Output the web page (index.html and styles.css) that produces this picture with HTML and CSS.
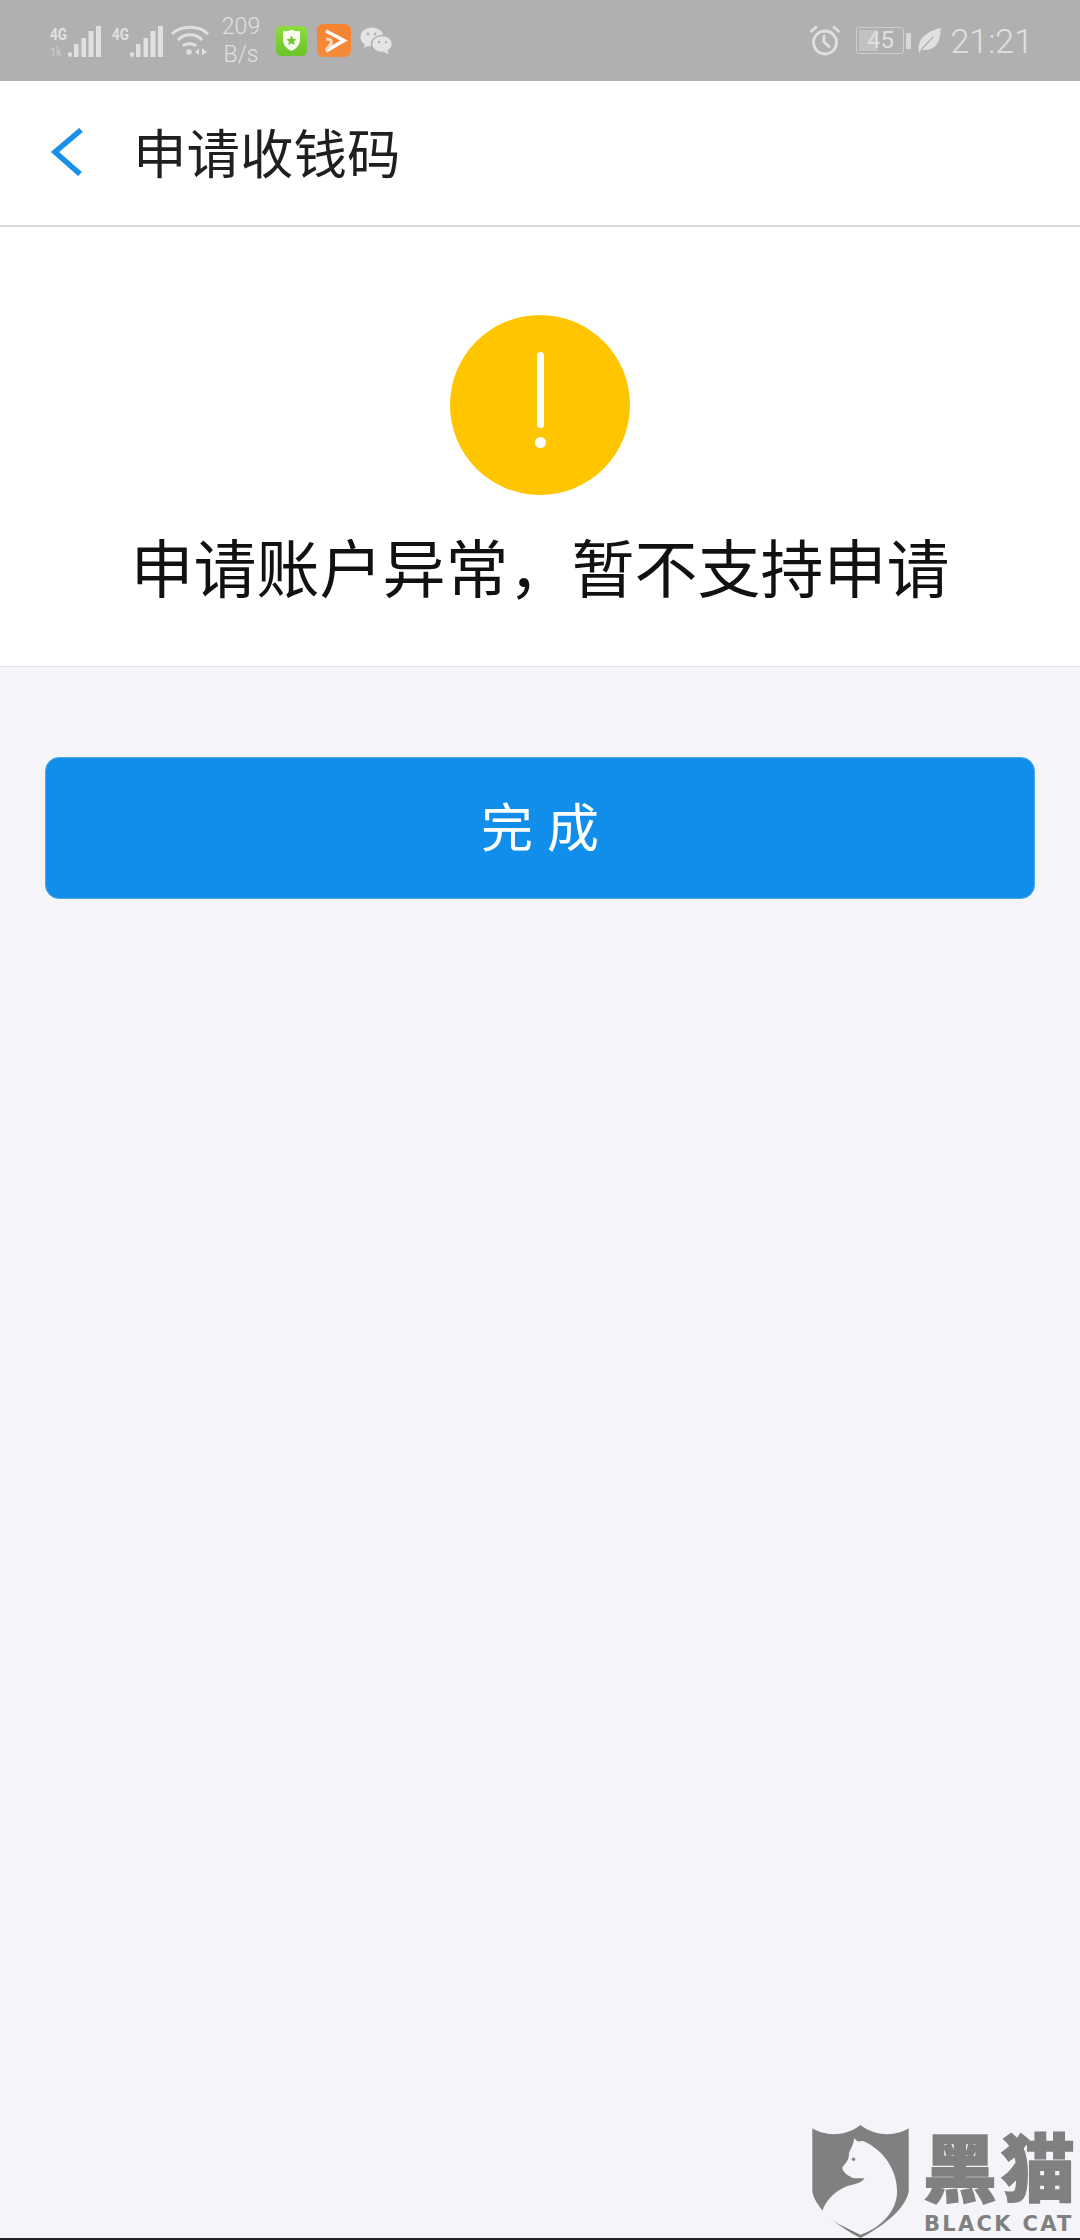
FILE: index.html
```html
<!DOCTYPE html>
<html lang="zh-CN">
<head>
    <meta charset="UTF-8">
    <meta name="viewport" content="width=device-width, initial-scale=1.0">
    <title>申请收钱码</title>
    <link rel="stylesheet" href="styles.css">
</head>
<body>
    <div class="status-bar">
        <div class="status-left">
            <svg class="signal" width="52" height="36" viewBox="0 0 52 36">
                <text x="0" y="18" class="net-label">4G</text>
                <text x="0" y="34" class="net-label dim">1k</text>
                <rect x="18" y="30" width="4" height="5" rx="2"/>
                <rect x="24" y="22" width="4.500" height="13"/>
                <rect x="31.500" y="16" width="4.500" height="19"/>
                <rect x="38.500" y="9" width="5" height="26"/>
                <rect x="46" y="4" width="5" height="31"/>
            </svg>
            <svg class="signal signal-2" width="51" height="36" viewBox="0 0 51 36">
                <text x="0" y="18" class="net-label">4G</text>
                <rect x="18" y="30" width="4" height="5" rx="2"/>
                <rect x="24" y="22" width="4.500" height="13"/>
                <rect x="31.500" y="16" width="4.500" height="19"/>
                <rect x="38.500" y="9" width="5" height="26"/>
                <rect x="46" y="4" width="5" height="31"/>
            </svg>
            <svg class="wifi" width="38" height="30" viewBox="0 0 38 30" fill="none" stroke="#e0e0e0" stroke-width="3">
                <path d="M1 9 C10 0 28 0 37 9"/>
                <path d="M7 15 C13 8 25 8 31 15"/>
                <path d="M12 21 C15 18 22 18 25 21"/>
                <circle cx="18" cy="27" r="2.800" fill="#e0e0e0" stroke="none"/>
                <path d="M28 23 L24 27 L28 30 Z M31 23 L36 27 L31 30 Z" fill="#e0e0e0" stroke="none"/>
            </svg>
            <div class="net-speed">209<br>B/s</div>
            <svg class="app-icon icon-shield" width="31" height="30" viewBox="0 0 31 30">
                <defs>
                    <linearGradient id="greenGrad" x1="0" y1="0" x2="0" y2="1">
                        <stop offset="0" stop-color="#8fdb3f"/>
                        <stop offset="1" stop-color="#6cc22a"/>
                    </linearGradient>
                    <linearGradient id="orangeGrad" x1="0" y1="0" x2="0" y2="1">
                        <stop offset="0" stop-color="#f5832e"/>
                        <stop offset="1" stop-color="#f78a3c"/>
                    </linearGradient>
                </defs>
                <rect width="31" height="30" rx="5" fill="url(#greenGrad)"/>
                <path d="M7 5 Q12 6 15.500 3.500 Q19 6 24 5 V14 Q24 21 15.500 25 Q7 21 7 14 Z" fill="#f6faef"/>
                <path d="M15.500 9.500 L17 12.800 L20.500 13.200 L18 15.500 L18.700 19 L15.500 17.200 L12.300 19 L13 15.500 L10.500 13.200 L14 12.800 Z" fill="#74c52e"/>
            </svg>
            <svg class="app-icon icon-play" width="34" height="33" viewBox="0 0 34 33">
                <rect width="34" height="33" rx="6" fill="url(#orangeGrad)"/>
                <path d="M9 7 L27 16.500 L9 27" fill="none" stroke="#fff" stroke-width="3.600"/>
                <path d="M9 15 C14 15 15 17 14 20 L9 26" fill="none" stroke="#fbd8b8" stroke-width="3.200"/>
            </svg>
            <svg class="app-icon icon-chat" width="33" height="27" viewBox="0 0 33 27" fill="#e4e4e4">
                <ellipse cx="12" cy="10" rx="11.500" ry="9.500"/>
                <path d="M5 16 L4 21 L10 18 Z"/>
                <ellipse cx="22" cy="17" rx="10.500" ry="8.500" stroke="#b0b0b0" stroke-width="1.500"/>
                <path d="M27 23 L29 27 L23 25 Z"/>
                <circle cx="8" cy="7" r="1.400" fill="#b0b0b0"/>
                <circle cx="15" cy="7" r="1.400" fill="#b0b0b0"/>
                <circle cx="19" cy="15" r="1.200" fill="#b0b0b0"/>
                <circle cx="26" cy="15" r="1.200" fill="#b0b0b0"/>
            </svg>
        </div>
        <div class="status-right">
            <svg class="alarm" width="32" height="31" viewBox="0 0 32 31" fill="none" stroke="#e0e0e0" stroke-width="2.800">
                <circle cx="16" cy="17.500" r="11.500"/>
                <path d="M15 10 V17 L21 22.500"/>
                <path d="M1.500 7 L8 1.500 M30.500 7 L24 1.500"/>
            </svg>
            <div class="battery">
                <div class="battery-body">
                    <div class="battery-fill" style="width: 45%"></div>
                    <span class="battery-num">45</span>
                </div>
                <div class="battery-cap"></div>
            </div>
            <svg class="leaf" width="23" height="27" viewBox="0 0 23 27">
                <path d="M22.500 1 C23 14 18 23 7 23 C4 23 2 23 1 26 C-1 16 3 6 22.500 1 Z" fill="#e0e0e0"/>
                <path d="M3 23 L15 10" stroke="#b0b0b0" stroke-width="1.300"/>
            </svg>
            <span class="clock">21:21</span>
        </div>
    </div>

    <header class="nav-bar">
        <svg class="back" width="33" height="48" viewBox="0 0 33 48" fill="none" stroke="#1a8fe8" stroke-width="5.500">
            <path d="M31 2 L5 24 L30 46"/>
        </svg>
        <h1>申请收钱码</h1>
    </header>

    <section class="result">
        <div class="warn-circle">
            <div class="warn-bar"></div>
            <div class="warn-dot"></div>
        </div>
        <p class="result-msg">申请账户异常，暂不支持申请</p>
    </section>

    <button class="done-btn" type="button">完成</button>

    <div class="watermark">
        <svg class="wm-shield" width="97" height="113" viewBox="95 75 290 340">
            <path d="M95 85 C125 105 190 115 240 75 C290 115 355 105 385 85 V275 C375 330 300 385 240 415 C180 385 105 330 95 275 Z" fill="#808080"/>
            <path d="M220 115 L232 125 L248 123 C310 150 350 210 350 275 C350 335 300 385 240 405 C200 385 150 365 125 335 C135 300 170 265 215 255 C235 250 245 245 252 235 C235 235 215 238 210 230 C195 225 185 210 185 203 C195 190 205 180 205 165 C205 150 222 135 220 115 Z" fill="#f4f4f9"/>
            <circle cx="219" cy="178" r="5" fill="#808080"/>
        </svg>
        <div class="wm-text">
            <div class="wm-cn">黑猫</div>
            <div class="wm-en">BLACK CAT</div>
        </div>
    </div>
    <div class="bottom-line"></div>
</body>
</html>
```

FILE: styles.css
```css
* {
    box-sizing: border-box;
}
html, body {
    height: 100%;
}
body {
    margin: 0;
    background-color: #f4f4f9;
    font-family: "Noto Sans CJK SC", "Liberation Sans", sans-serif;
    position: relative;
    overflow: hidden;
}

/* status bar */
.status-bar {
    height: 81px;
    background-color: #b0b0b0;
    display: flex;
    justify-content: space-between;
    align-items: center;
    padding: 0 47px 0 50px;
    color: #e0e0e0;
}
.status-left, .status-right {
    display: flex;
    align-items: center;
}
.signal {
    fill: #e0e0e0;
    margin-top: -2px;
}
.net-label {
    font-family: "Roboto", sans-serif;
    font-size: 17px;
    font-weight: 700;
    fill: #e0e0e0;
    transform: scaleX(.8);
}
.net-label.dim {
    fill: #c6c6c6;
    font-size: 13px;
}
.signal-2 {
    margin-left: 10px;
}
.wifi {
    margin-left: 8px;
    margin-top: -2px;
}
.net-speed {
    font-family: "Roboto", sans-serif;
    font-weight: 300;
    font-size: 23px;
    line-height: 28px;
    text-align: center;
    margin-left: 11px;
    width: 42px;
}
.icon-shield {
    margin-left: 14px;
}
.icon-play {
    margin-left: 10px;
}
.icon-chat {
    margin-left: 9px;
}
.alarm {
    margin-right: 15px;
}
.battery {
    display: flex;
    align-items: center;
    margin-right: 7px;
}
.battery-body {
    width: 48px;
    height: 27px;
    border: 1.500px solid #cdcdcd;
    border-radius: 3px;
    position: relative;
    padding: 2px;
}
.battery-fill {
    height: 100%;
    background-color: #c2c2c2;
}
.battery-num {
    position: absolute;
    top: -1px;
    left: 0;
    right: 0;
    text-align: center;
    font-family: "Roboto", sans-serif;
    font-size: 24px;
    line-height: 26px;
}
.battery-cap {
    width: 5px;
    height: 16px;
    margin-left: 2px;
    background-color: #d8d8d8;
}
.clock {
    font-family: "Roboto", sans-serif;
    font-weight: 300;
    font-size: 34px;
    margin-left: 9px;
}

/* nav */
.nav-bar {
    height: 146px;
    background-color: #fff;
    border-bottom: 2px solid #d8d8d8;
    display: flex;
    align-items: center;
    padding: 0 0 2px 50px;
}
.back {
    flex: none;
}
.nav-bar h1 {
    margin: 0 0 4px 50px;
    font-size: 53.500px;
    font-weight: 400;
    color: #1f1f1f;
}

/* result */
.result {
    height: 440px;
    background-color: #fff;
    border-bottom: 1px solid #e2e2e6;
    display: flex;
    flex-direction: column;
    align-items: center;
    padding-top: 88px;
}
.warn-circle {
    width: 180px;
    height: 180px;
    border-radius: 50%;
    background-color: #ffc600;
    display: flex;
    flex-direction: column;
    align-items: center;
    padding-top: 37px;
}
.warn-bar {
    width: 7px;
    height: 76px;
    border-radius: 3.500px;
    background-color: #fff;
}
.warn-dot {
    width: 11px;
    height: 11px;
    margin-top: 9px;
    border-radius: 50%;
    background-color: #fff;
}
.result-msg {
    margin: 25px 0 0;
    font-size: 63px;
    line-height: 90px;
    font-weight: 400;
    color: #111;
    white-space: nowrap;
}

/* button */
.done-btn {
    display: block;
    width: 990px;
    height: 142px;
    margin: 90px 0 0 45px;
    border: 1px solid #4aa9ef;
    border-radius: 14px;
    background-color: #118ee9;
    color: #fff;
    font-family: inherit;
    font-size: 52px;
    font-weight: 400;
    letter-spacing: 14px;
    padding: 0 0 7px 14px;
}

/* watermark */
.watermark {
    position: absolute;
    left: 812px;
    top: 2125px;
    display: flex;
}
.wm-text {
    margin-left: 14px;
    color: #808080;
}
.wm-cn {
    font-size: 74px;
    line-height: 78px;
    font-weight: 900;
    letter-spacing: 4px;
    -webkit-text-stroke: 1.500px #808080;
    white-space: nowrap;
}
.wm-en {
    font-family: "DejaVu Sans", sans-serif;
    font-size: 21px;
    line-height: 22px;
    font-weight: 700;
    letter-spacing: 2.300px;
    margin: 10px 0 0 1px;
    white-space: nowrap;
}
.bottom-line {
    position: absolute;
    left: 0;
    right: 0;
    bottom: 0;
    height: 2px;
    background-color: #222;
}
```
